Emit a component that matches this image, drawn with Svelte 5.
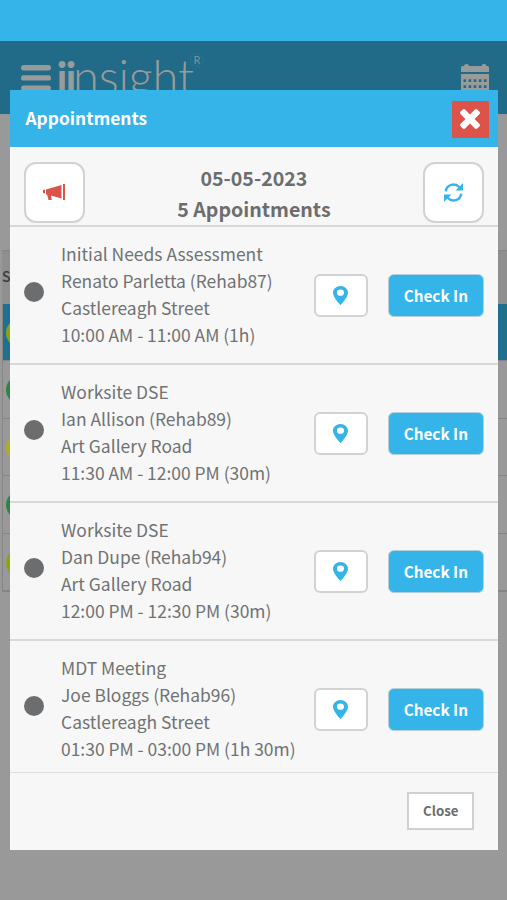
<script lang="ts">
  const appointments = [
    { type: 'Initial Needs Assessment', client: 'Renato Parletta (Rehab87)', place: 'Castlereagh Street', time: '10:00 AM - 11:00 AM (1h)' },
    { type: 'Worksite DSE', client: 'Ian Allison (Rehab89)', place: 'Art Gallery Road', time: '11:30 AM - 12:00 PM (30m)' },
    { type: 'Worksite DSE', client: 'Dan Dupe (Rehab94)', place: 'Art Gallery Road', time: '12:00 PM - 12:30 PM (30m)' },
    { type: 'MDT Meeting', client: 'Joe Bloggs (Rehab96)', place: 'Castlereagh Street', time: '01:30 PM - 03:00 PM (1h 30m)' },
  ]

  const statuses = ['lime', 'green', 'yellow', 'green', 'lime']
</script>

<div class="screen">
  <div class="status-bar"></div>
  <header class="topbar">
    <svg class="brand" viewBox="0 0 200 49" width="200" height="49">
      <g class="bars">
        <rect x="0" y="12" width="30" height="5.4" rx="2.7" />
        <rect x="0" y="22.2" width="30" height="5.4" rx="2.7" />
        <rect x="0" y="32.4" width="30" height="5.4" rx="2.7" />
      </g>
      <text class="logo-bold" x="35.5" y="41" textLength="20">ii</text>
      <text class="logo-thin" x="52" y="41" textLength="121">nsight</text>
      <circle class="ring" cx="176" cy="7" r="6.500" />
      <text class="logo-reg" x="172.5" y="11">R</text>
    </svg>
    <svg class="calendar" viewBox="0 0 28 30" width="28" height="30">
      <path d="M1.500 2H3a2.500 2 0 0 1 5 0H20.500a2.500 2 0 0 1 5 0H26.500Q28 2 28 3.500V8H0V3.500Q0 2 1.500 2z" />
      <path fill-rule="evenodd" d="M0 10h28v20H0z M2.500 15.300h2.600v2.600H2.500z M7.600 15.300h2.600v2.600H7.600z M12.700 15.300h2.600v2.600H12.700z M17.800 15.300h2.600v2.600H17.800z M22.900 15.300h2.600v2.600H22.900z M2.500 21.300h2.600v2.600H2.500z M7.600 21.300h2.600v2.600H7.600z M12.700 21.300h2.600v2.600H12.700z M17.800 21.300h2.600v2.600H17.800z M22.900 21.300h2.600v2.600H22.900z" />
    </svg>
  </header>

  <div class="table">
    <div class="th">S</div>
    {#each statuses as status, i}
      <div class="tr" class:selected={i === 0}><span class="status {status}"></span></div>
    {/each}
  </div>

  <div class="modal">
    <div class="modal-header">
      <span>Appointments</span>
      <button class="dismiss" aria-label="Dismiss">
        <svg viewBox="302 366 1188 1188" width="20" height="20"><path d="M1490 1322q0 40-28 68l-136 136q-28 28-68 28t-68-28l-294-294-294 294q-28 28-68 28t-68-28l-136-136q-28-28-28-68t28-68l294-294-294-294q-28-28-28-68t28-68l136-136q28-28 68-28t68 28l294 294 294-294q28-28 68-28t68 28l136 136q28 28 28 68t-28 68l-294 294 294 294q28 28 28 68z" /></svg>
      </button>
    </div>

    <div class="summary">
      <button class="square red" aria-label="Announcements">
        <svg class="horn" viewBox="0 0 22 17" width="22" height="17">
          <path d="M0 6l2-.5v4L0 9zM3 5.500L18.500 1v13.500L8 11.500l.8 4.500H5.500L4 10.500H3zM20 0h2v16h-2z" />
        </svg>
      </button>
      <div class="totals">
        <div>05-05-2023</div>
        <div>5 Appointments</div>
      </div>
      <button class="square blue" aria-label="Refresh">
        <svg viewBox="0 0 18 18" width="19" height="19">
          <path class="arc" d="M1.700 8A7.300 7.300 0 0 1 14.500 4M16.300 10A7.300 7.300 0 0 1 3.500 14" />
          <path d="M18 0v7h-7zM0 18v-7h7z" />
        </svg>
      </button>
    </div>

    <div class="list">
      {#each appointments as appt}
        <div class="appt">
          <span class="dot"></span>
          <div class="info">
            <div>{appt.type}</div>
            <div>{appt.client}</div>
            <div>{appt.place}</div>
            <div>{appt.time}</div>
          </div>
          <button class="pin" aria-label="Map">
            <svg viewBox="5 2 14 20" width="15" height="19" preserveAspectRatio="none">
              <path fill-rule="evenodd" d="M12 2C8.130 2 5 5.130 5 9c0 5.250 7 13 7 13s7-7.750 7-13c0-3.870-3.130-7-7-7zm0 10.300a3.300 3.300 0 1 1 0-6.600 3.300 3.300 0 0 1 0 6.600z" />
            </svg>
          </button>
          <button class="check-in">Check In</button>
        </div>
      {/each}
    </div>

    <div class="modal-footer">
      <button class="close">Close</button>
    </div>
  </div>
</div>

<style>
  :global(body) {
    margin: 0;
    background: #999;
  }

  .screen {
    position: relative;
    width: 507px;
    height: 900px;
    overflow: hidden;
    background: #999;
    font-family: 'Noto Sans CJK SC', 'Open Sans', sans-serif;
    color: #6b6d6e;
  }

  .screen * { box-sizing: border-box; }

  button {
    display: flex;
    align-items: center;
    justify-content: center;
    padding: 0;
    font-family: inherit;
    font-weight: 700;
  }

  svg {
    display: block;
    fill: currentColor;
  }

  .status-bar {
    height: 41px;
    background: #34b4e8;
  }

  .topbar {
    display: flex;
    justify-content: space-between;
    height: 73px;
    padding: 12px 18px 0 21px;
    background: #216b88;
    color: #999b9b;
  }

  .brand { overflow: visible; }
  .calendar { margin-top: 11px; }

  .logo-bold {
    font: 700 43px Lato, sans-serif;
  }

  .logo-thin {
    font: 300 47px Lato, sans-serif;
  }

  .logo-reg {
    font: 400 11px Lato, sans-serif;
    fill: #7594a0;
  }

  .ring {
    fill: none;
    stroke: #2b728e;
  }

  .table {
    margin: 136px 0 0 2px;
    border: 1px solid #858585;
    border-right: 0;
  }

  .th {
    height: 53px;
    line-height: 50px;
    margin-left: -1px;
    background: #8f8f8f;
    color: #3c3c3c;
    font-size: 14px;
    font-weight: 500;
  }

  .tr {
    height: 57.400px;
    padding: 15px 3px;
    border-bottom: 1px solid #858585;
  }

  .tr.selected { background: #216f8e; }

  .status {
    display: block;
    width: 28px;
    height: 28px;
    border-radius: 50%;
  }

  .status.lime { background: #8ba512; }
  .status.green { background: #2f8546; }
  .status.yellow { background: #b5a92b; }

  .modal {
    position: absolute;
    top: 90px;
    left: 9.500px;
    display: flex;
    flex-direction: column;
    width: 488.800px;
    height: 760px;
    background: #f7f7f7;
  }

  .modal-header {
    display: flex;
    align-items: center;
    justify-content: space-between;
    height: 57px;
    padding: 0 9.500px 3px 16px;
    background: #34b4e8;
    color: #fff;
    font-size: 17.350px;
    font-weight: 700;
  }

  .dismiss {
    width: 37px;
    height: 37px;
    margin-top: 4px;
    padding-bottom: 1px;
    border: 0;
    background: #db5349;
    color: #fff;
  }

  .summary {
    display: flex;
    justify-content: space-between;
    height: 80px;
    padding: 15px 14.500px 0;
    border-bottom: 2px solid #d8d8d8;
  }

  .square {
    width: 61px;
    height: 61px;
    border: 2px solid #d2d2d2;
    border-radius: 12px;
    background: #fff;
  }

  .red { color: #db5349; }
  .blue { color: #34b4e8; }

  .horn { margin-right: 2px; }

  .arc {
    fill: none;
    stroke: currentColor;
    stroke-width: 2.300;
  }

  .totals {
    padding-top: 1px;
    font-size: 19.600px;
    font-weight: 700;
    line-height: 30.500px;
    text-align: center;
  }

  .list {
    height: 546px;
    overflow: hidden;
    border-bottom: 1px solid #e0e0e0;
  }

  .appt {
    display: flex;
    align-items: center;
    height: 138px;
    padding: 0 14.500px;
    border-bottom: 2px solid #d8d8d8;
  }

  .dot {
    width: 20px;
    height: 20px;
    margin-bottom: 6px;
    border-radius: 50%;
    background: #6b6d6e;
  }

  .info {
    flex: 1;
    min-width: 0;
    margin-top: -2px;
    padding-left: 17px;
    color: #707273;
    font-size: 17.450px;
    line-height: 27px;
    white-space: nowrap;
  }

  .pin {
    width: 54px;
    height: 43px;
    border: 2px solid #d2d2d2;
    border-radius: 6px;
    background: #fff;
    color: #34b4e8;
  }

  .check-in {
    width: 96px;
    height: 43px;
    margin-left: 20px;
    border: 1px solid #b5cfdb;
    border-radius: 6px;
    background: #34b4e8;
    color: #fff;
    font-size: 15.300px;
  }

  .modal-footer {
    display: flex;
    flex: 1;
    align-items: center;
    justify-content: flex-end;
    padding: 0 24px 1px 0;
  }

  .close {
    width: 67px;
    height: 38px;
    padding-bottom: 2px;
    border: 2px solid #d0d0d0;
    background: #fff;
    color: #6b6d6e;
    font-size: 13.300px;
  }
</style>
